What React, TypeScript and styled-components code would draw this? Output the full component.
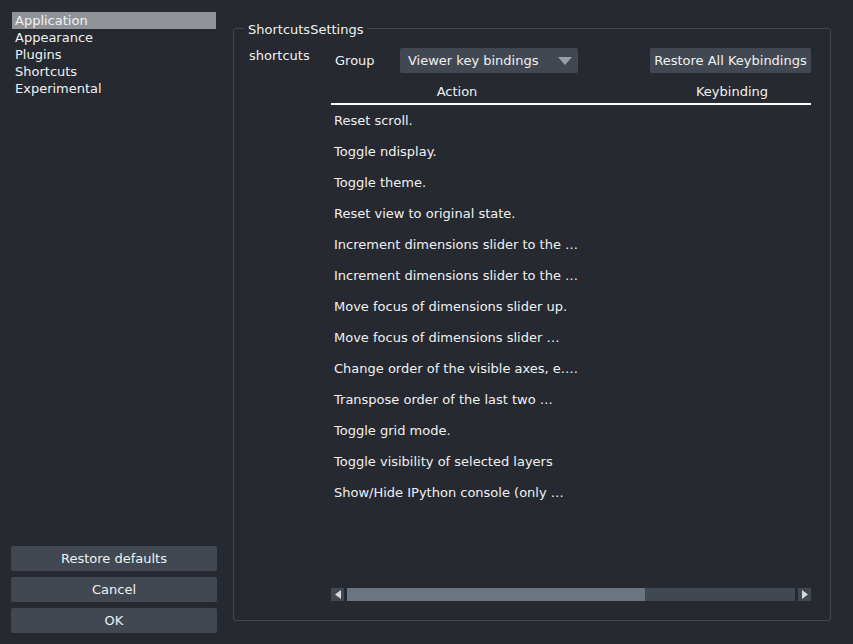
import React from "react";
import styled, { createGlobalStyle } from "styled-components";

const Global = createGlobalStyle`
  html, body { margin: 0; padding: 0; background: #262930; }
  body {
    font-family: "DejaVu Sans", "Liberation Sans", sans-serif;
    font-size: 13px;
    color: #f0f1f2;
  }
  * { box-sizing: border-box; }
`;

const Window = styled.div`
  width: 853px;
  height: 644px;
  display: flex;
  background: #262930;
  overflow: hidden;
`;

const Sidebar = styled.div`
  width: 217px;
  padding: 12px 0 11px 11px;
  display: flex;
  flex-direction: column;
  justify-content: space-between;
`;

const NavList = styled.ul`
  list-style: none;
  margin: 0 0 0 1px;
  padding: 0;
  width: 204px;
`;

const NavItem = styled.li<{ $active?: boolean }>`
  height: 17px;
  line-height: 17px;
  padding-left: 3px;
  background: ${(p) => (p.$active ? "#909499" : "transparent")};
  color: #f0f1f2;
  white-space: nowrap;
`;

const ButtonStack = styled.div`
  display: flex;
  flex-direction: column;
  gap: 6px;
`;

const Button = styled.button<{ $width?: number }>`
  height: 25px;
  width: ${(p) => (p.$width ? `${p.$width}px` : "100%")};
  border: none;
  border-radius: 2px;
  background: #414851;
  color: #f0f1f2;
  font-family: inherit;
  font-size: 13px;
  padding: 0 4px;
  text-align: center;
  white-space: nowrap;
`;

const Main = styled.div`
  flex: 1;
  padding: 28px 22px 23px 16px;
  display: flex;
`;

const GroupBox = styled.div`
  position: relative;
  flex: 1;
  border: 1px solid #41454d;
  border-radius: 3px;
  padding: 19px 19px 19px 15px;
  display: flex;
`;

const GroupTitle = styled.div`
  position: absolute;
  top: -7px;
  left: 10px;
  padding: 0 4px;
  line-height: 16px;
  background: #262930;
  color: #f0f1f2;
`;

const FieldLabel = styled.div`
  width: 82px;
  padding-top: 1px;
  line-height: 14px;
  color: #f0f1f2;
`;

const Field = styled.div`
  width: 480px;
  display: flex;
  flex-direction: column;
`;

const Toolbar = styled.div`
  height: 25px;
  display: flex;
  align-items: center;
`;

const ToolbarLabel = styled.div`
  width: 69px;
  padding-left: 4px;
`;

const Combo = styled.div`
  width: 178px;
  height: 25px;
  border-radius: 2px;
  background: #414851;
  display: flex;
  align-items: center;
  justify-content: space-between;
  padding: 0 6px 0 8px;
`;

const Spacer = styled.div`
  flex: 1;
`;

const Table = styled.div`
  flex: 1;
  display: flex;
  flex-direction: column;
  margin-top: 7px;
  overflow: hidden;
`;

const Header = styled.div`
  display: flex;
  height: 25px;
  border-bottom: 2px solid #ffffff;
  width: 480px;
`;

const HeaderCell = styled.div<{ $w: number }>`
  flex: 0 0 ${(p) => p.$w}px;
  text-align: center;
  line-height: 23px;
  white-space: nowrap;
`;

const Body = styled.div`
  flex: 1;
  overflow: hidden;
`;

const Row = styled.div`
  display: flex;
  height: 31px;
  align-items: center;
`;

const Cell = styled.div<{ $w: number }>`
  flex: 0 0 ${(p) => p.$w}px;
  padding-left: 3px;
  white-space: nowrap;
  overflow: hidden;
`;

const ScrollBar = styled.div`
  height: 13px;
  display: flex;
  gap: 3px;
`;

const ScrollArrow = styled.div`
  width: 13px;
  height: 13px;
  background: #414851;
  display: flex;
  align-items: center;
  justify-content: center;
`;

const ScrollTrack = styled.div`
  flex: 1;
  background: #414851;
  display: flex;
`;

const ScrollThumb = styled.div`
  background: #6b7580;
  height: 100%;
`;

const actions = [
  "Reset scroll.",
  "Toggle ndisplay.",
  "Toggle theme.",
  "Reset view to original state.",
  "Increment dimensions slider to the …",
  "Increment dimensions slider to the …",
  "Move focus of dimensions slider up.",
  "Move focus of dimensions slider …",
  "Change order of the visible axes, e.…",
  "Transpose order of the last two …",
  "Toggle grid mode.",
  "Toggle visibility of selected layers",
  "Show/Hide IPython console (only …",
];

const nav = ["Application", "Appearance", "Plugins", "Shortcuts", "Experimental"];

export default function App() {
  return (
    <>
      <Global />
      <Window>
        <Sidebar>
          <NavList>
            {nav.map((n, i) => (
              <NavItem key={n} $active={i === 0}>
                {n}
              </NavItem>
            ))}
          </NavList>
          <ButtonStack>
            <Button>Restore defaults</Button>
            <Button>Cancel</Button>
            <Button>OK</Button>
          </ButtonStack>
        </Sidebar>
        <Main>
          <GroupBox>
            <GroupTitle>ShortcutsSettings</GroupTitle>
            <FieldLabel>shortcuts</FieldLabel>
            <Field>
              <Toolbar>
                <ToolbarLabel>Group</ToolbarLabel>
                <Combo>
                  <span>Viewer key bindings</span>
                  <svg width="14" height="8" viewBox="0 0 14 8">
                    <polygon points="0,0 14,0 7,8" fill="#9a9ea5" />
                  </svg>
                </Combo>
                <Spacer />
                <Button $width={161}>Restore All Keybindings</Button>
              </Toolbar>
              <Table>
                <Header>
                  <HeaderCell $w={252}>Action</HeaderCell>
                  <HeaderCell $w={298}>Keybinding</HeaderCell>
                </Header>
                <Body>
                  {actions.map((a, i) => (
                    <Row key={i}>
                      <Cell $w={252}>{a}</Cell>
                      <Cell $w={228}></Cell>
                    </Row>
                  ))}
                </Body>
                <ScrollBar>
                  <ScrollArrow>
                    <svg width="6" height="9" viewBox="0 0 6 9">
                      <polygon points="6,0 6,9 0,4.5" fill="#d6d8db" />
                    </svg>
                  </ScrollArrow>
                  <ScrollTrack>
                    <ScrollThumb style={{ width: "66.5%" }} />
                  </ScrollTrack>
                  <ScrollArrow>
                    <svg width="6" height="9" viewBox="0 0 6 9">
                      <polygon points="0,0 0,9 6,4.5" fill="#d6d8db" />
                    </svg>
                  </ScrollArrow>
                </ScrollBar>
              </Table>
            </Field>
          </GroupBox>
        </Main>
      </Window>
    </>
  );
}
